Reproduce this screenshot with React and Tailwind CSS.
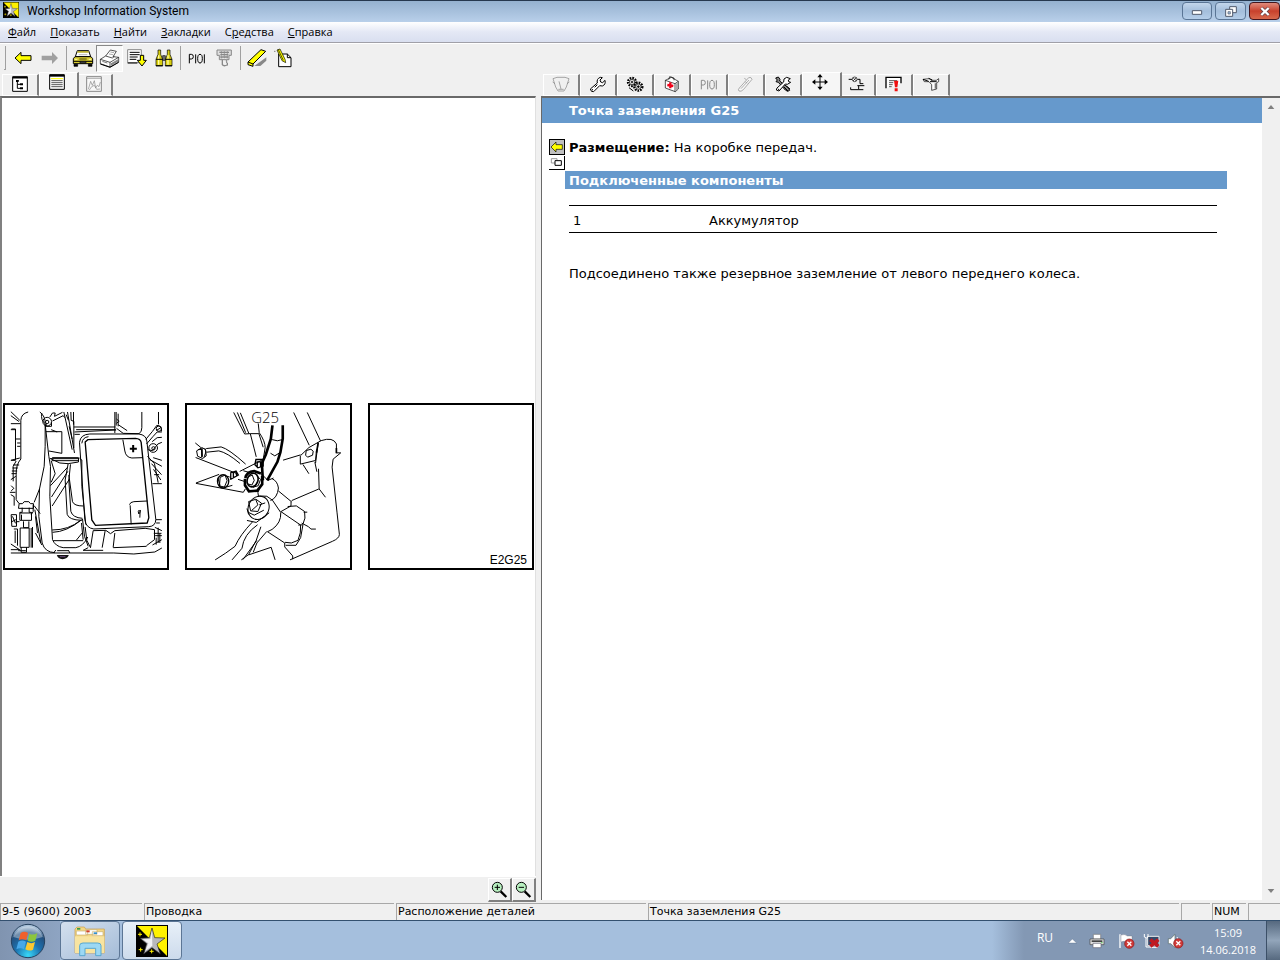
import React from "react";

const Svg = ({ w = 60, h = 60, className = "", children, ...rest }) => (
  <svg
    width={w / 3}
    height={h / 3}
    viewBox={`0 0 ${w} ${h}`}
    fill="none"
    stroke="#000"
    strokeWidth="3"
    aria-hidden="true"
    className={`block shrink-0 ${className}`}
    {...rest}
  >
    {children}
  </svg>
);

/* ---------- toolbar icons ---------- */
const BackIcon = () => (
  <Svg>
    <path d="M6 30 L24 13 V23 H54 V37 H24 V47 Z" fill="#ff0" />
  </Svg>
);
const ForwardIcon = () => (
  <Svg>
    <path d="M54 30 L36 12 V23 H5 V37 H36 V48 Z" fill="#a0a0a0" stroke="none" />
  </Svg>
);
const CarIcon = () => (
  <Svg w={66}>
    <path d="M16 8 H50 L56 26 H10 Z" fill="#fff" />
    <path d="M17 9 H49 L51 14 H15 Z" fill="#b8ac30" stroke="none" />
    <path d="M20 20 H46" stroke="#b8b8b8" />
    <path d="M9 26 H57 L62 32 V47 H4 V32 Z" fill="#d8cc30" />
    <path d="M22 33 H44" strokeWidth="2" />
    <path d="M4 40 H62" strokeWidth="3" />
    <path d="M24 40 H42 V45 H24 Z" fill="#555" strokeWidth="2" />
    <path d="M8 34 H16 M50 34 H58" stroke="#fffbb0" />
    <path d="M6 49 H17 V55 H6 Z M49 49 H60 V55 H49 Z" fill="#000" strokeWidth="2" />
  </Svg>
);
const PrinterIcon = () => (
  <Svg w={63}>
    <path d="M4 34 L20 24 L34 6 L52 10 L42 26 L59 28 V42 L33 57 L4 47 Z" fill="#fff" strokeWidth="2" />
    <path d="M4 34 L33 43 L59 28 M33 43 V57" strokeWidth="2" />
    <path d="M20 24 L40 30 L46 25" strokeWidth="2" />
    <path d="M36 46 L57 34 V41 L36 53 Z" fill="#888" stroke="none" />
    <path d="M34 12 L45 14 M30 18 L42 20" stroke="#aaa" />
    <path d="M10 40 L25 45" stroke="#777" />
    <path d="M4 48 L33 58 L59 43" />
  </Svg>
);
const ListDownIcon = () => (
  <Svg>
    <path d="M2 5 H43 V44 H2 Z" fill="#fff" stroke="#888" />
    <path d="M8 13 H38 M8 20 H38 M8 27 H32 M8 34 H28 M2 45 H31" />
    <path d="M40 22 H50 V37 H58 L45 54 L31 37 H40 Z" fill="#ff0" />
  </Svg>
);
const BinocularsIcon = () => (
  <Svg>
    <path d="M12 6 H20 V19 L26 34 V54 H6 V34 L12 19 Z" fill="#d8ce10" strokeWidth="2" />
    <path d="M40 6 H48 V19 L54 34 V54 H34 V34 L40 19 Z" fill="#d8ce10" strokeWidth="2" />
    <path d="M26 23 H34 V37 H26 Z" fill="#777" strokeWidth="2" />
    <path d="M14 22 V50 M42 22 V50" stroke="#fffca0" strokeWidth="4" />
    <path d="M6 34 H26 M34 34 H54 M6 53 H26 M34 53 H54" />
  </Svg>
);
const PioiIcon = ({ color = "#000" }) => (
  <Svg w={54} h={45} stroke={color}>
    <path d="M4 37 V10 H10 Q16 10 16 17 Q16 24 10 24 H4 M23 10 V37 M49 10 V37" />
    <ellipse cx="36" cy="23" rx="7" ry="13" />
  </Svg>
);
const ConnectorIcon = () => (
  <Svg stroke="#888">
    <path d="M9 6 H52 V22 H45 V35 H38 V45 M9 6 V22 H16 V35 H38" fill="#ddd" />
    <path d="M16 13 H45 M19 20 H43 M19 27 H43 M25 35 V50 Q29 56 40 51 V44" strokeWidth="4" />
    <path d="M22 10 V33 M31 10 V33 M40 10 V33" strokeDasharray="3 3" />
  </Svg>
);
const EraserIcon = () => (
  <Svg>
    <path d="M22 54 L58 28 V38 L40 54 Z" fill="#888" stroke="none" />
    <path d="M3 42 L42 5 L56 10 L18 48 V55 L3 50 Z" fill="#ff0" />
    <path d="M3 42 L18 48" />
  </Svg>
);
const NoteIcon = () => (
  <Svg>
    <path d="M14 18 H40 L51 29 V56 H14 Z" fill="#fff" />
    <path d="M40 18 V29 H51" />
    <path d="M9 6 L18 3 L33 34 L35 44 L24 38 Z" fill="#ff0" strokeWidth="2" />
    <path d="M1 10 H4 M13 5 L28 37" strokeWidth="2" />
  </Svg>
);

/* ---------- tab icons ---------- */
const TreeIcon = () => (
  <Svg w={48} h={48}>
    <path d="M2 2 H46 V46 H2 Z" fill="#fff" />
    <path d="M2 5 H46" strokeWidth="5" />
    <path d="M13 14 H20 M16 16 V37 H24 M16 25 H24" />
    <path d="M12 12 H20 V18 H12 Z M24 22 H33 V28 H24 Z M24 34 H33 V40 H24 Z" fill="#000" stroke="none" />
  </Svg>
);
const PageIcon = () => (
  <Svg w={48} h={48}>
    <path d="M2 2 H46 V46 H2 Z" fill="#fff" />
    <path d="M2 5 H46" strokeWidth="6" />
    <path d="M7 20 H41 M7 26 H41 M7 32 H41 M7 38 H41" strokeWidth="2" />
    <path d="M6 14 H42" stroke="#ff0" strokeWidth="3" />
  </Svg>
);
const GraphIcon = () => (
  <Svg w={48} h={48} stroke="#888">
    <path d="M2 2 H46 V46 H2 Z" fill="#f8f8f8" />
    <path d="M2 7 H46" strokeWidth="2" />
    <path d="M7 40 L14 16 L19 28 L25 14 L29 36 L34 28 L39 32 L43 18 M10 42 L17 32 L25 28 L32 40 L42 39" strokeWidth="2" />
  </Svg>
);
const GaugeIcon = () => (
  <Svg w={54} h={51} stroke="#808080">
    <path d="M3 8 L15 4 H39 L51 8 L43 33 L36 45 H18 L11 33 Z M2 18 L9 23 M52 18 L45 23" strokeWidth="2" />
    <path d="M27 39 L21 16 M19 40 H35" strokeWidth="2" />
  </Svg>
);
const WrenchIcon = () => (
  <Svg w={51} h={51}>
    <path
      d="M4 39 L25 21 Q22 8 34 4 L40 5 L33 12 L35 18 L41 20 L48 13 Q51 26 40 30 L32 29 L14 47 Q6 49 4 39 Z"
      fill="#fff"
    />
    <path d="M10 39 V43 M25 26 L17 34" />
  </Svg>
);
const GearsIcon = () => (
  <Svg w={54} h={51}>
    <circle cx="18" cy="18" r="12" fill="#fff" strokeWidth="7" strokeDasharray="5 3" />
    <circle cx="18" cy="18" r="8" fill="#fff" strokeWidth="2" />
    <circle cx="37" cy="32" r="12" fill="#fff" strokeWidth="7" strokeDasharray="5 3" />
    <circle cx="37" cy="32" r="8" fill="#ddd" strokeWidth="2" />
    <path d="M14 18 H22 M18 14 V22 M33 32 H41 M37 28 V36 M9 35 L22 45" strokeWidth="3" />
  </Svg>
);
const FirstAidIcon = () => (
  <Svg w={48} h={51}>
    <path d="M4 13 L22 4 L43 16 V39 L34 47 L4 36 Z" fill="#fff" strokeWidth="2" />
    <path d="M4 13 L33 23 L43 16 M33 23 V47 M14 11 L17 2 L30 6 V13" strokeWidth="2" />
    <path d="M35 24 L42 19 V38 L35 45 Z" fill="#aaa" stroke="none" />
    <path d="M19 19 V37 M10 27 L28 30" stroke="#f00018" strokeWidth="7" />
  </Svg>
);
const ProbeIcon = () => (
  <Svg w={51} h={51} stroke="#888">
    <path d="M7 36 L35 5 Q43 2 45 10 L19 41 Q12 48 6 45 Q2 42 7 36 Z" fill="#f7f7f7" strokeWidth="2" />
    <path d="M12 38 L36 12 M25 17 L30 22 M22 7 L28 11" strokeWidth="2" />
  </Svg>
);
const ToolsIcon = () => (
  <Svg w={54} h={51}>
    <path d="M5 6 L13 3 L18 10 L17 15 L44 36 L47 43 L41 46 L34 42 L13 19 L6 17 L10 12 Z" fill="#888" />
    <path d="M49 8 L43 12 L44 17 L50 19 L40 25 L34 24 L15 45 L7 42 L9 36 L29 18 L30 9 L38 4 Z" fill="#fff" />
    <path d="M30 33 L42 45 M37 30 L48 39 M12 39 L16 42" strokeWidth="3" />
  </Svg>
);
const MoveIcon = () => (
  <Svg w={48} h={48}>
    <path d="M24 5 V43 M5 24 H43" />
    <path d="M24 0 L32 10 H16 Z M24 48 L16 38 H32 Z M0 24 L10 16 V32 Z M48 24 L38 32 V16 Z" fill="#000" stroke="none" />
  </Svg>
);
const CircuitIcon = () => (
  <Svg w={51} h={48}>
    <path d="M2 10 H13 M28 10 H36 V23 H46 M32 29 V41 H46 M8 41 H32" />
    <circle cx="20" cy="10" r="7" fill="#fff" strokeWidth="2" />
    <path d="M15 5 L25 15 M25 5 L15 15" strokeWidth="2" />
    <path d="M28 29 H49 M8 34 V41" />
  </Svg>
);
const AlertPageIcon = () => (
  <Svg w={51} h={48}>
    <path d="M3 37 V4 H48 V22" fill="#fff" strokeWidth="4" />
    <path d="M12 14 H36 M12 20 H25 M12 26 H23 M12 32 H20" strokeWidth="2" />
    <path d="M27 14 H40 L37 34 H30 Z M29 37 H38 V46 H29 Z" fill="#f01010" stroke="none" />
  </Svg>
);
const FillerIcon = () => (
  <Svg w={54} h={48}>
    <path d="M3 10 L22 8 L27 13 H43 L50 8 V17 L44 20 V39 L29 43 V26 L21 17 H7 Z" fill="#fff" strokeWidth="2" />
    <path d="M3 10 L20 16 M24 17 H44 M20 7 L31 12" />
    <path d="M40 22 V38" stroke="#777" strokeWidth="4" />
  </Svg>
);

const StarLogo = ({ size }) => (
  <svg width={size} height={size} viewBox="0 0 96 96" aria-hidden="true" className="block shrink-0">
    <path d="M0 0 H96 V96 H0 Z" fill="#000" />
    <path d="M3 3 H93 V93 Z" fill="#fff200" />
    <path d="M48 9 L56 38 L87 39 L63 57 L73 87 L48 68 L23 87 L32 56 L12 40 L40 38 Z" fill="#b8b8bc" stroke="#222" strokeWidth="2" />
    <path d="M48 16 L49 62 L28 78 L37 55 L20 43 L43 42 Z" fill="#f1f1f4" />
    <path d="M12 22 V34 M6 28 H18 M14 68 V80 M8 74 H20 M47 73 V85 M41 79 H53" stroke="#fff200" strokeWidth="3" />
  </svg>
);

/* ---------- illustrations ---------- */
const EngineBayDrawing = () => (
  <svg viewBox="17 16 484 487" className="block h-full w-full" fill="none" stroke="#000" strokeWidth="3" aria-hidden="true">
    <path d="M85 37 Q64 42 63 62 V178 Q48 195 49 225 V300 L58 312 M120 37 Q137 50 136 72 V140 L133 200 L119 268 L103 308" />
    <path d="M33 36 L60 62 M33 48 L58 66 M33 72 H62 M35 88 H47 V182 H34 M47 118 H62 M52 130 H62 M52 140 H62 M33 182 L60 175 M33 90 H47" />
    <path d="M49 184 L40 200 V245 M40 196 H58 M38 205 H54 M36 214 H52 M35 222 H50 M33 240 L48 230 M34 258 L42 266 L34 274 M30 278 H47 M33 285 L43 291 V318" />
    <path d="M136 74 L147 170 L152 200 L150 290 L158 420 Q166 440 190 444 H228 Q250 440 264 412" />
    <path d="M119 268 L117 350 L127 430 Q135 458 165 459 M103 318 L121 342 M105 330 L123 430 M107 350 L113 400 M107 400 L126 436" />
    <path d="M126 40 Q122 62 136 72 M139 72 V80 H155 V68 M158 64 L190 48 L195 54 M150 52 L158 40 H166 L164 50 L188 38" />
    <circle cx="142" cy="66" r="13" /><circle cx="142" cy="67" r="5" />
    <path d="M138 96 H186 V161 L147 154 M154 90 L172 97" />
    <path d="M192 37 L217 150 M203 37 L224 160 M213 37 L214 62 L222 65 V145 M221 37 V75 M199 45 L206 62 M208 80 L217 118" />
    <path d="M222 82 H347 M229 90 H348 M224 97 L349 91 M224 104 H240 M345 37 V100 M349 37 V78 M355 42 V80 M350 58 L358 65 L350 71" />
    <path d="M355 75 L382 93 M350 86 L370 101 L418 102 Q426 96 426 84 V37 M476 37 V74" />
    <path d="M153 177 H238 M156 183 H236 M150 176 L180 190 L205 192 L236 187 V174 H157" />
    <path d="M154 183 L166 222 L154 248 M155 292 L204 215 M157 319 L209 238 M152 258 L204 202 M205 192 L196 241 L202 344 Q207 361 246 362 M212 194 L207 242 L213 335 Q218 354 248 356 M207 226 L218 306 Q223 319 250 319" />
    <path d="M239 128 Q242 104 270 103 L417 103 Q439 106 441 124 L468 360 Q467 380 447 381 L282 388 Q258 385 255 360 Z" />
    <path d="M246 131 Q248 113 266 111 M239 175 L246 181 V260 L258 375" />
    <path d="M256 127 L264 120 L407 116 Q422 117 424 128 L447 354 L442 370 L287 377 L276 361 Z" strokeWidth="4" />
    <path d="M369 120 L375 154 Q378 173 396 175 L428 174 M391 317 L394 374 M389 315 Q391 307 402 306 L443 304" />
    <path d="M400 136 V158 M390 147 H411" strokeWidth="6" />
    <path d="M418 331 Q413 335 417 343 Q422 338 421 331 L420 354" />
    <path d="M438 119 L458 95 L471 77 Q486 78 485 95 M440 133 L460 110 L472 97 H486 M444 150 L458 153 L474 133 L486 128 M457 126 L472 114 L486 113 M470 92 L482 85 M443 170 L464 192 L475 249 M450 180 L486 200 M455 192 L485 225 M461 209 L483 241 M463 225 H478 M458 252 H486 M460 174 L486 182" />
    <circle cx="477" cy="87" r="8" /><circle cx="460" cy="145" r="13" /><circle cx="461" cy="146" r="5" />
    <path d="M468 360 H486 M469 370 H480 M465 383 L486 393 M462 401 H485 M466 408 H486 M469 414 V435 M475 384 V430 M480 402 V430 M458 436 L486 420" />
    <path d="M248 358 L254 410 L265 440 M256 382 L261 422 L272 444 L280 393 L318 392 L332 402 L345 393 L436 386 L464 390 V420 L440 438 M316 393 L307 444 M345 400 L340 443 M340 444 L440 440" />
    <path d="M158 398 Q200 397 246 360 M157 391 Q207 391 242 362 M245 370 L250 420 M160 423 H250 M247 400 L230 421 M265 444 L250 452 H310" />
    <path d="M58 312 H68 L73 306 H87 L92 312 H101 V326 H56 Z M67 324 V338 H60 V362 H95 V338 H88 V324 M60 340 H96 M65 345 V361 M71 365 V384 H87 V365 M61 385 H88 V443 H61 Z M94 385 V444 M98 382 V444 M100 315 V336 L94 345" />
    <path d="M34 345 H50 V380 H36 Z M38 350 L47 371 M34 367 L48 360 M48 366 H59 M42 388 H53 V438 M46 393 V430 M33 433 L62 452 M33 450 H58 M64 443 V458 H80 V443 M55 453 H78" />
    <path d="M33 460 H342 L402 463 L465 457 L486 445 M172 453 H207 M162 459 L168 451 M206 452 L210 460" />
    <path d="M171 466 H207 Q203 477 188 479 Q174 477 171 466 Z" fill="#111" stroke="none" />
    <path d="M180 471 H197" stroke="#705080" />
  </svg>
);

const GroundPointDrawing = () => (
  <svg viewBox="21 16 490 487" className="block h-full w-full" fill="none" stroke="#000" strokeWidth="3" aria-hidden="true">
    <path d="M162 37 L195 102 L212 101 L224 147 L230 171 M173 37 L198 98 M182 38 L208 101 M212 101 L238 101 L251 142 M236 70 L239 98 Q257 124 257 143 L252 174" />
    <path d="M343 37 L390 136 M384 37 L424 123" />
    <path d="M279 76 L274 117 L259 164 L247 191 L250 242 M310 76 V116 L303 157 L294 186 L263 242" strokeWidth="8" />
    <path d="M278 119 Q294 126 309 119 M273 160 L286 168 L302 158 M311 181 L364 165" />
    <path d="M46 129 L63 143 M47 173 L173 222 M75 145 Q82 155 73 171 M66 143 L77 149 L79 168 L68 176 L53 169 L50 153 Z M54 149 H65 L67 169 M79 146 L124 141 Q147 147 198 193 M80 157 L117 153 Q142 158 181 191 M180 215 L247 181" />
    <path d="M66 145 V172" strokeWidth="5" />
    <path d="M48 250 L118 224 M48 251 L191 278 L197 268" />
    <path d="M151 220 L169 214 L176 226 L152 239 M153 220 V240 M161 218 V236 M169 215 L171 231" strokeWidth="4" />
    <ellipse cx="130" cy="245" rx="17" ry="20" strokeWidth="4" />
    <path d="M121 233 L136 226 L142 243 L134 262 L119 259 Z M140 229 L150 232 M140 262 L158 257 M114 234 L121 258" strokeWidth="3" />
    <path d="M229 179 H251 V199 L235 204 L226 195 Z M233 184 V200 M243 184 V200 M231 186 H247" strokeWidth="4" />
    <path d="M197 235 Q201 216 224 214 L244 221 M196 237 V257 L208 275 L233 273 L248 254 V229" strokeWidth="8" />
    <ellipse cx="219" cy="241" rx="16" ry="21" transform="rotate(20 219 241)" strokeWidth="5" />
    <path d="M204 232 L218 226 L224 242 L217 256 L205 253 M232 228 L243 239 L236 258 L220 263" strokeWidth="3" />
    <path d="M191 213 L209 218 M175 239 L194 245 M247 224 L265 242 L282 235" />
    <path d="M249 245 L235 279 L237 291 M278 237 Q294 244 297 265 Q294 295 273 303 M239 289 L262 290 L279 302 L304 339 Q306 370 278 390 L264 397 M297 274 L337 307 M335 306 V319 L305 336" />
    <ellipse cx="237" cy="325" rx="31" ry="36" transform="rotate(25 237 325)" />
    <path d="M207 306 L229 299 L246 311 L235 336 L213 334 Z M229 301 L235 316 L216 333 M239 316 L257 310 M202 327 L207 345 M207 339 L224 347 L253 332" />
    <path d="M202 363 L230 369 L269 340 M219 367 Q181 407 166 441 Q139 462 106 482 M234 376 Q192 405 187 447 L157 482 M244 382 L230 423 L207 466 L185 482 M262 396 L232 431 L221 459" />
    <path d="M190 481 L232 423 M207 467 L275 444 L287 482 M264 397 L316 431 V443 L340 470 V480 M317 429 L336 431 L356 423 Q366 401 364 377 L304 336 M319 438 L350 438 L364 415 L371 376 L357 377" />
    <path d="M325 321 L351 319 L376 336 L377 356 L371 374 M337 303 L419 268 M418 207 L420 268 L439 293 M367 371 L388 382 L395 389 L410 389 M373 338 H384" />
    <path d="M364 167 L389 143 L426 122 Q462 110 472 132 V159 H485 L462 178 L459 202 L474 340 L481 405 Q481 417 460 426 L332 482 M363 168 V193 L409 182 L412 149 M371 194 L389 222 M407 187 L413 216" />
    <path d="M381 152 L395 148 L402 154 L400 166 L385 172 L379 166 Z M417 128 L409 190" />
    <path d="M417 128 L412 158 M472 144 V160" strokeWidth="5" />
    <text x="215" y="68" fontFamily="'Open Sans', sans-serif" fontWeight="300" fontSize="45" fill="#000" stroke="none">G25</text>
  </svg>
);

/* ---------- small pieces ---------- */
const ToolButton = ({ label, pressed, children }) => (
  <button
    type="button"
    aria-label={label}
    title={label}
    className={
      pressed
        ? "flex h-[27px] w-[27px] items-center justify-center border border-t-[#888] border-r-white border-b-white border-l-[#888] bg-[#f8f8f8]"
        : "flex h-[27px] w-[27px] items-center justify-center"
    }
  >
    {children}
  </button>
);
const Separator = () => (
  <div className="flex w-[6px] justify-center">
    <div className="h-6 w-px bg-[#a0a0a0]" />
  </div>
);

const Tab = ({ label, selected, children }) => (
  <button
    type="button"
    role="tab"
    aria-selected={!!selected}
    aria-label={label}
    className={
      selected
        ? "z-10 -mr-[3px] flex h-6 w-10 items-center justify-center border-t border-r-2 border-l border-t-white border-r-[#808080] border-l-white bg-[#f6f6f6] pr-[3px] pb-[5px]"
        : "flex h-[22px] w-[37px] items-center justify-center border-t border-r-2 border-b border-l border-t-white border-r-[#808080] border-b-white border-l-white pr-px pb-[2px]"
    }
  >
    {children}
  </button>
);

const StatusCell = ({ className, children }) => (
  <div className={`h-[17px] truncate border-t border-l border-t-[#a8a8a8] border-l-[#a8a8a8] pl-px leading-4 ${className}`}>
    {children}
  </div>
);

const menu = [
  ["", "Ф", "айл"],
  ["", "П", "оказать"],
  ["", "Н", "айти"],
  ["", "З", "акладки"],
  ["С", "р", "едства"],
  ["", "С", "правка"],
];

const rightTabs = [
  ["Приборы", GaugeIcon],
  ["Ремонт", WrenchIcon],
  ["Узлы", GearsIcon],
  ["Поиск неисправностей", FirstAidIcon],
  ["Разъёмы", () => <PioiIcon color="#888" />],
  ["Измерения", ProbeIcon],
  ["Инструмент", ToolsIcon],
  ["Расположение деталей", MoveIcon],
  ["Электросхемы", CircuitIcon],
  ["Бюллетени", AlertPageIcon],
  ["Обслуживание", FillerIcon],
];

const Magnifier = ({ plus }) => (
  <Svg w={51} h={51}>
    <path d="M29 31 L46 48" strokeWidth="7" />
    <circle cx="19" cy="19" r="15" fill="#b8f0c0" />
    <path d={plus ? "M11 19 H27 M19 11 V27" : "M11 19 H27"} />
  </Svg>
);

const ErrorBadge = ({ x, y }) => (
  <g>
    <circle cx={x} cy={y} r="14" fill="#d03a38" stroke="#8a1518" strokeWidth="2" />
    <path d={`M${x - 6} ${y - 6} L${x + 6} ${y + 6} M${x + 6} ${y - 6} L${x - 6} ${y + 6}`} stroke="#fff" strokeWidth="4" />
  </g>
);

export default function App() {
  return (
    <div className="flex min-h-screen flex-col bg-[#f0f0f0] font-['DejaVu_Sans',sans-serif] text-[13px] text-black">
      {/* Title bar */}
      <header className="flex h-[22px] items-start border-t border-[#26384e] bg-linear-to-b from-[#95b1cf] to-[#b9d0ea] pt-px pl-[3px]">
        <StarLogo size={16} />
        <h1 className="flex-1 pl-2 font-['Roboto',sans-serif] text-[12px] leading-[18px]">Workshop Information System</h1>
        <div className="flex gap-[3px]">
          <button type="button" aria-label="Свернуть" className="flex h-[18px] w-[30px] items-center justify-center rounded-sm border border-[#5a7595] bg-linear-to-b from-[#c3d6eb] via-[#a4bedb] to-[#b5cee9]">
            <Svg w={36} h={30}><path d="M4 14 H32 V25 H4 Z" fill="#fff" stroke="#505a6c" /></Svg>
          </button>
          <button type="button" aria-label="Восстановить" className="flex h-[18px] w-[31px] items-center justify-center rounded-sm border border-[#5a7595] bg-linear-to-b from-[#c3d6eb] via-[#a4bedb] to-[#b5cee9]">
            <Svg w={36} h={33} stroke="#505a6c">
              <path d="M14 2 H34 V20 H14 Z" fill="#fff" />
              <path d="M2 10 H23 V31 H2 Z" fill="#fff" />
              <path d="M9 17 H16 V24 H9 Z" fill="#a4bedb" strokeWidth="2" />
            </Svg>
          </button>
          <button type="button" aria-label="Закрыть" className="flex h-[18px] w-[31px] items-center justify-center rounded-sm border border-[#45151c] bg-linear-to-b from-[#e08a7c] via-[#c8402c] to-[#d8684c]">
            <Svg w={36} h={33}>
              <path d="M7 6 L29 27 M29 6 L7 27" stroke="#5a4048" strokeWidth="11" />
              <path d="M7 6 L29 27 M29 6 L7 27" stroke="#fff" strokeWidth="7" />
            </Svg>
          </button>
        </div>
      </header>

      {/* Menu */}
      <nav className="flex h-[21px] items-start gap-[14px] border-b border-[#a0a0a8] bg-linear-to-b from-white via-[#e4e8f5] to-[#d9dff0] pl-2 font-['Open_Sans',sans-serif] text-[11px]">
        {menu.map(([pre, key, post]) => (
          <button key={key + post} type="button" className="leading-5">
            {pre}<span className="underline">{key}</span>{post}
          </button>
        ))}
      </nav>

      {/* Toolbar */}
      <div role="toolbar" aria-label="Панель инструментов" className="flex h-[29px] items-center border-t border-white">
        <div className="flex w-[9px] pl-1">
          <div className="h-6 w-[2px] border-r border-b border-[#a0a0a0]" />
        </div>
        <ToolButton label="Назад"><BackIcon /></ToolButton>
        <ToolButton label="Вперёд"><ForwardIcon /></ToolButton>
        <Separator />
        <ToolButton label="Автомобиль"><CarIcon /></ToolButton>
        <ToolButton label="Печать" pressed><PrinterIcon /></ToolButton>
        <ToolButton label="Список"><ListDownIcon /></ToolButton>
        <ToolButton label="Поиск"><BinocularsIcon /></ToolButton>
        <Separator />
        <ToolButton label="Контакты"><PioiIcon /></ToolButton>
        <ToolButton label="Разъём"><ConnectorIcon /></ToolButton>
        <Separator />
        <ToolButton label="Маркер"><EraserIcon /></ToolButton>
        <ToolButton label="Заметка"><NoteIcon /></ToolButton>
      </div>

      {/* Panes */}
      <main className="grid flex-1 grid-cols-[536fr_739fr] gap-x-[5px]">
        <section className="flex min-w-0 flex-col">
          <div role="tablist" className="flex h-6 items-end pl-[2px]">
            <Tab label="Дерево"><TreeIcon /></Tab>
            <Tab label="Страница" selected><PageIcon /></Tab>
            <Tab label="График"><GraphIcon /></Tab>
          </div>
          <div className="flex flex-1 flex-col justify-center border-t-2 border-r border-l-2 border-t-[#696969] border-r-[#e0e0e0] border-l-[#808080] bg-white px-px pb-px">
            <div className="grid grid-cols-3 gap-4">
              <figure className="aspect-square border-2 border-black"><EngineBayDrawing /></figure>
              <figure className="aspect-square border-2 border-black"><GroundPointDrawing /></figure>
              <figure className="flex aspect-square items-end justify-end border-2 border-black">
                <figcaption className="px-[5px] font-['Liberation_Sans',sans-serif] text-[12px] leading-4">E2G25</figcaption>
              </figure>
            </div>
          </div>
          <div className="flex h-[26px] items-end justify-end border-t border-white">
            <button type="button" aria-label="Увеличить" className="flex h-6 w-6 items-center justify-center border-t border-r-2 border-b-2 border-l border-t-white border-r-[#808080] border-b-[#808080] border-l-white"><Magnifier plus /></button>
            <button type="button" aria-label="Уменьшить" className="flex h-6 w-6 items-center justify-center border-t border-r-2 border-b-2 border-l border-t-white border-r-[#808080] border-b-[#808080] border-l-white"><Magnifier /></button>
          </div>
        </section>

        <section className="flex min-w-0 flex-col pb-[2px]">
          <div role="tablist" className="flex h-6 items-end pl-[2px]">
            {rightTabs.map(([label, Icon], i) => (
              <Tab key={label} label={label} selected={i === 7}><Icon /></Tab>
            ))}
          </div>
          <div className="flex flex-1 border-t-2 border-l border-[#696969] bg-white">
            <article className="flex-1">
              <h2 className="bg-[#6699cc] pl-[27px] text-[13px] leading-[25px] font-bold text-white">Точка заземления G25</h2>
              <div className="flex pt-[15px] pr-[35px] pl-[7px]">
                <div className="flex w-4 shrink-0 flex-col gap-px pt-px">
                  <button type="button" aria-label="К предыдущему" className="flex h-4 items-center border border-black bg-[#c0c0c0]">
                    <Svg w={42} h={42}><path d="M3 21 L18 6 V14 H37 V28 H18 V36 Z" fill="#ff0" strokeWidth="2" /></Svg>
                  </button>
                  <button type="button" aria-label="Иллюстрации" className="flex h-[14px] items-center border-r border-b border-black bg-white">
                    <Svg w={42} h={39}>
                      <path d="M7 8 H24 V21 H7 Z" stroke="#999" />
                      <path d="M18 14 H37 V28 H18 Z" fill="#fff" />
                    </Svg>
                  </button>
                </div>
                <div className="min-w-0 flex-1">
                  <p className="pl-1 leading-[19px]"><b>Размещение:</b> На коробке передач.</p>
                  <h3 className="mt-[14px] bg-[#6699cc] pt-px pl-1 text-[13px] leading-[17px] font-bold text-white">Подключенные компоненты</h3>
                  <div className="pt-4 pr-[10px] pl-1">
                    <table className="w-full border-y border-black">
                      <tbody>
                        <tr>
                          <td className="h-[27px] w-[140px] pt-1 pl-1">1</td>
                          <td className="pt-1">Аккумулятор</td>
                        </tr>
                      </tbody>
                    </table>
                  </div>
                  <p className="pt-[31px] pl-1 leading-[19px]">Подсоединено также резервное заземление от левого переднего колеса.</p>
                </div>
              </div>
            </article>
            <div className="flex w-[18px] flex-col items-center justify-between bg-[#f0f0f0] py-[6px]">
              <button type="button" aria-label="Прокрутить вверх"><Svg w={24} h={18} stroke="none"><path d="M2 15 L12 3 L22 15 Z" fill="#808080" /></Svg></button>
              <button type="button" aria-label="Прокрутить вниз"><Svg w={24} h={18} stroke="none"><path d="M2 3 L12 15 L22 3 Z" fill="#808080" /></Svg></button>
            </div>
          </div>
        </section>
      </main>

      {/* Status bar */}
      <div role="status" className="flex h-[18px] items-end gap-[2px] text-[11px]">
        <StatusCell className="w-[142px]">9-5 (9600) 2003</StatusCell>
        <StatusCell className="w-[250px]">Проводка</StatusCell>
        <StatusCell className="w-[250px]">Расположение деталей</StatusCell>
        <StatusCell className="flex-1">Точка заземления G25</StatusCell>
        <StatusCell className="w-[29px]" />
        <StatusCell className="w-[34px]">NUM</StatusCell>
        <StatusCell className="w-8" />
      </div>

      {/* Taskbar */}
      <footer className="flex h-10 items-stretch border-t border-[#33506f] bg-[#a5bfdd] font-['Open_Sans',sans-serif] text-[11px] text-white">
        <div className="flex w-[60px] items-center bg-linear-to-r from-[#8094b0] to-[#8ea4c2] pl-[10px]">
          <button type="button" aria-label="Пуск">
            <svg width="36" height="36" viewBox="0 0 108 108" className="block" aria-hidden="true">
              <defs>
                <radialGradient id="orb" cx="50%" cy="92%" r="85%">
                  <stop offset="0" stopColor="#38d8f8" />
                  <stop offset="0.45" stopColor="#1c72b0" />
                  <stop offset="0.8" stopColor="#24507e" />
                  <stop offset="1" stopColor="#a8c0d8" />
                </radialGradient>
              </defs>
              <circle cx="54" cy="54" r="50" fill="url(#orb)" stroke="#27425f" strokeWidth="3" />
              <path d="M10 42 A46 46 0 0 1 98 42 Q54 58 10 42 Z" fill="#fff" opacity="0.35" />
              <path d="M32 30 Q43 22 54 30 L49 52 Q38 45 26 52 Z" fill="#f0602c" />
              <path d="M58 32 Q70 38 82 30 L76 53 Q65 59 53 53 Z" fill="#8cc63c" />
              <path d="M25 56 Q37 49 48 56 L42 79 Q31 72 19 79 Z" fill="#48a8e8" />
              <path d="M52 57 Q64 64 75 57 L69 80 Q58 86 46 79 Z" fill="#fcc830" />
            </svg>
          </button>
        </div>
        <div className="flex gap-[2px]">
          <button type="button" aria-label="Проводник" className="flex w-[60px] items-center justify-center rounded-sm border border-[#5c7695] bg-linear-to-br from-[#d4e0ee] to-[#a4bcd8]">
            <svg width="34" height="32" viewBox="0 0 102 96" className="block" aria-hidden="true">
              <path d="M6 12 L12 6 H34 L38 12 H94 V84 H6 Z" fill="#f3d886" stroke="#c89c48" strokeWidth="2" />
              <path d="M10 18 H44 V30 H10 Z M38 14 H72 V28 H38 Z M58 20 H90 V32 H58 Z" fill="#fff" stroke="#c8b070" strokeWidth="2" />
              <path d="M12 9 H22 V14 H12 Z" fill="#3a9c48" /><path d="M40 16 H50 V22 H40 Z" fill="#d04028" /><path d="M62 22 H72 V27 H62 Z" fill="#3090d0" />
              <path d="M6 34 H94 V84 H6 Z" fill="#f8e4a0" />
              <path d="M20 92 V62 Q20 54 30 54 H74 Q84 54 84 62 V92 H68 V70 H36 V92 Z" fill="#9cd8f4" stroke="#58a8d0" strokeWidth="3" />
            </svg>
          </button>
          <button type="button" aria-label="Workshop Information System" className="flex w-[60px] items-center justify-center rounded-sm border border-[#5c7695] bg-linear-to-b from-[#e8f0f8] to-[#cddbec]">
            <StarLogo size={32} />
          </button>
        </div>
        <div className="flex-1" />
        <div className="w-8 bg-linear-to-r from-[#a5bfdd] to-[#8398b4]" />
        <div className="flex items-center bg-[#8398b4] pl-3">
          <button type="button" className="w-[18px] pb-[6px] text-[12px]">RU</button>
          <button type="button" aria-label="Скрытые значки" className="ml-[14px]"><Svg w={27} h={18} stroke="#4a6080" strokeWidth="1"><path d="M1 15 L13 3 L26 15 Z" fill="#fff" /></Svg></button>
          <button type="button" aria-label="Принтер" className="ml-3">
            <Svg w={48} h={48} strokeWidth="2">
              <path d="M13 4 H35 V18 H13 Z" fill="#fff" stroke="#777" />
              <path d="M3 18 H45 V35 H3 Z" fill="#ddd" stroke="#444" />
              <path d="M8 22 H40 V27 H8 Z" fill="#444" stroke="none" />
              <path d="M36 29 H41" stroke="#2c2" />
              <path d="M12 31 H36 V44 H12 Z" fill="#fff" stroke="#667" />
            </Svg>
          </button>
          <button type="button" aria-label="Центр поддержки" className="ml-[13px]">
            <Svg w={51} h={48}>
              <path d="M6 4 V45" stroke="#fff" strokeWidth="4" />
              <path d="M9 6 Q20 2 28 9 L42 9 V28 L28 28 Q18 22 9 27 Z" fill="#fff" stroke="#667" strokeWidth="1" />
              <ErrorBadge x={34} y={32} />
            </Svg>
          </button>
          <button type="button" aria-label="Сеть" className="ml-2">
            <Svg w={51} h={48}>
              <path d="M14 10 H48 V38 H14 Z" fill="#32496a" stroke="#eee" />
              <path d="M4 3 V12 Q10 18 15 12 V3 M9 15 V42 H30" stroke="#fff" />
              <path d="M23 43 H44" stroke="#fff" />
              <path d="M22 20 L46 40 M46 20 L22 40" stroke="#c01a22" strokeWidth="11" />
            </Svg>
          </button>
          <button type="button" aria-label="Громкость" className="ml-[7px]">
            <Svg w={51} h={48}>
              <path d="M4 17 H11 L24 4 V44 L11 32 H4 Z" fill="#fff" stroke="#566" strokeWidth="2" />
              <path d="M30 12 Q38 22 34 34" stroke="#fff" />
              <ErrorBadge x={34} y={31} />
            </Svg>
          </button>
          <div className="ml-[14px] w-[60px] text-center leading-[17px]"><div>15:09</div><div>14.06.2018</div></div>
        </div>
        <div className="w-2 bg-[#8398b4]" />
        <button type="button" aria-label="Показать рабочий стол" className="w-[14px] border-l border-[#3c5068] bg-linear-to-b from-[#56697f] via-[#92a5ba] to-[#56697f]" />
      </footer>
    </div>
  );
}
